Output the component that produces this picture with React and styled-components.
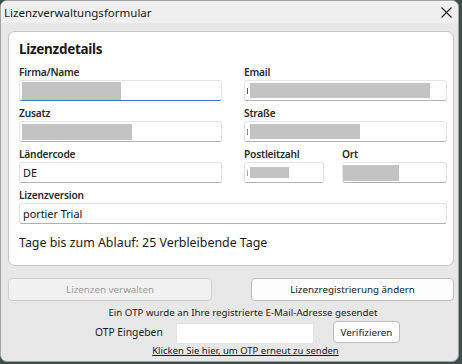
import React from "react";
import styled, { createGlobalStyle } from "styled-components";

const GlobalStyle = createGlobalStyle`
  html, body {
    margin: 0;
    padding: 0;
    background: #3c4f4a;
    font-family: "Noto Sans", "Open Sans", sans-serif;
  }
  * { box-sizing: border-box; }
`;

const Window = styled.div`
  width: 459px;
  height: 362px;
  background: #e7e7e7;
  border: 1px solid #a3a3a3;
  border-radius: 7px;
  overflow: hidden;
  display: flex;
  flex-direction: column;
`;

const TitleBar = styled.div`
  height: 22px;
  flex: none;
  background: #efefef;
  display: flex;
  align-items: center;
  justify-content: space-between;
  padding: 0 6px 0 3px;
  font-size: 11.5px;
  color: #1a1a1a;
`;

const Body = styled.div`
  flex: 1;
  padding: 8px 4px 0 7px;
  display: flex;
  flex-direction: column;
`;

const Panel = styled.div`
  background: #fff;
  border: 1px solid #c6c6c6;
  border-radius: 7px;
  padding: 7px 6px 14px 10px;
`;

const PanelTitle = styled.div`
  font-size: 13.5px;
  font-weight: 700;
  letter-spacing: -0.3px;
  line-height: 20px;
  color: #1a1a1a;
  margin-bottom: 6px;
`;

const Grid = styled.div`
  display: grid;
  grid-template-columns: 203px 203px;
  column-gap: 22px;
  row-gap: 5px;
`;

const Field = styled.div`
  display: flex;
  flex-direction: column;
  grid-column: ${(p) => (p.$wide ? "1 / span 2" : "auto")};
`;

const SubRow = styled.div`
  display: grid;
  grid-template-columns: 80px 105px;
  column-gap: 18px;
`;

const Label = styled.div`
  font-size: 10.2px;
  font-weight: 600;
  letter-spacing: -0.2px;
  line-height: 15px;
  color: #2a2a2a;
`;

const Input = styled.div`
  height: 21px;
  background: #fff;
  border: 1px solid #e3e3e3;
  border-bottom: 1px solid ${(p) => (p.$focus ? "#3d78c8" : "#b0b0b0")};
  border-radius: 3px;
  display: flex;
  align-items: center;
  padding-left: ${(p) => p.$pad ?? 2}px;
  font-size: 10.8px;
  color: #111;
`;

const Redacted = styled.span`
  display: inline-block;
  background: #c3c3c3;
  height: ${(p) => p.$h}px;
  width: ${(p) => p.$w}px;
`;

const Tick = styled.span`
  display: inline-block;
  width: 1px;
  height: 6px;
  margin-right: 2px;
  background: ${(p) => p.$color};
`;

const Remaining = styled.div`
  margin-top: 11px;
  font-size: 12.4px;
  line-height: 16px;
  color: #1a1a1a;
`;

const ButtonRow = styled.div`
  display: flex;
  justify-content: space-between;
  margin-top: 12px;
`;

const Button = styled.div`
  width: ${(p) => p.$w}px;
  height: ${(p) => p.$h}px;
  border: 1px solid ${(p) => (p.$disabled ? "#cfcfcf" : "#bdbdbd")};
  border-radius: 4px;
  background: ${(p) => (p.$disabled ? "#f1f1f1" : "#fdfdfd")};
  color: ${(p) => (p.$disabled ? "#9c9c9c" : "#1a1a1a")};
  font-size: 9.8px;
  display: flex;
  align-items: center;
  justify-content: center;
`;

const Message = styled.div`
  margin-top: 5px;
  text-align: center;
  font-size: 9.7px;
  line-height: 14px;
  color: #1a1a1a;
  padding-left: 24px;
`;

const OtpRow = styled.div`
  display: flex;
  align-items: center;
  height: 24px;
  padding-left: 87px;
`;

const OtpLabel = styled.div`
  font-size: 10.3px;
  color: #1a1a1a;
  width: 81px;
`;

const OtpInput = styled.div`
  width: 138px;
  height: 21px;
  margin-top: 2px;
  background: #fff;
  border: 1px solid #e3e3e3;
  border-radius: 2px;
  margin-right: 19px;
`;

const Link = styled.div`
  text-align: center;
  font-size: 9.5px;
  line-height: 14px;
  color: #1a1a1a;
  text-decoration: underline;
  padding-left: 29px;
`;

function CloseIcon() {
  return (
    <svg width="11" height="11" viewBox="0 0 11 11">
      <path d="M0.5 0.5 L10.5 10.5 M10.5 0.5 L0.5 10.5" stroke="#222" strokeWidth="1.1" />
    </svg>
  );
}

export default function App() {
  return (
    <>
      <GlobalStyle />
      <Window>
        <TitleBar>
          <span>Lizenzverwaltungsformular</span>
          <CloseIcon />
        </TitleBar>
        <Body>
          <Panel>
            <PanelTitle>Lizenzdetails</PanelTitle>
            <Grid>
              <Field>
                <Label>Firma/Name</Label>
                <Input $focus>
                  <Redacted $w={99} $h={18} />
                </Input>
              </Field>
              <Field>
                <Label>Email</Label>
                <Input>
                  <Tick $color="#555" />
                  <Redacted $w={180} $h={15} />
                </Input>
              </Field>
              <Field>
                <Label>Zusatz</Label>
                <Input>
                  <Redacted $w={110} $h={16} />
                </Input>
              </Field>
              <Field>
                <Label>Straße</Label>
                <Input>
                  <Tick $color="#888" />
                  <Redacted $w={110} $h={15} />
                </Input>
              </Field>
              <Field>
                <Label>Ländercode</Label>
                <Input $pad={3}>DE</Input>
              </Field>
              <SubRow>
                <Field>
                  <Label>Postleitzahl</Label>
                  <Input>
                    <Tick $color="#d9a050" />
                    <Redacted $w={39} $h={11} />
                  </Input>
                </Field>
                <Field>
                  <Label>Ort</Label>
                  <Input $pad={0}>
                    <Redacted $w={56} $h={16} />
                  </Input>
                </Field>
              </SubRow>
              <Field $wide>
                <Label>Lizenzversion</Label>
                <Input $pad={3}>portier Trial</Input>
              </Field>
            </Grid>
            <Remaining>Tage bis zum Ablauf: 25 Verbleibende Tage</Remaining>
          </Panel>
          <ButtonRow>
            <Button $w={204} $h={23} $disabled>Lizenzen verwalten</Button>
            <Button $w={203} $h={23}>Lizenzregistrierung ändern</Button>
          </ButtonRow>
          <Message>Ein OTP wurde an Ihre registrierte E-Mail-Adresse gesendet</Message>
          <OtpRow>
            <OtpLabel>OTP Eingeben</OtpLabel>
            <OtpInput />
            <Button $w={67} $h={22}>Verifizieren</Button>
          </OtpRow>
          <Link>Klicken Sie hier, um OTP erneut zu senden</Link>
        </Body>
      </Window>
    </>
  );
}
